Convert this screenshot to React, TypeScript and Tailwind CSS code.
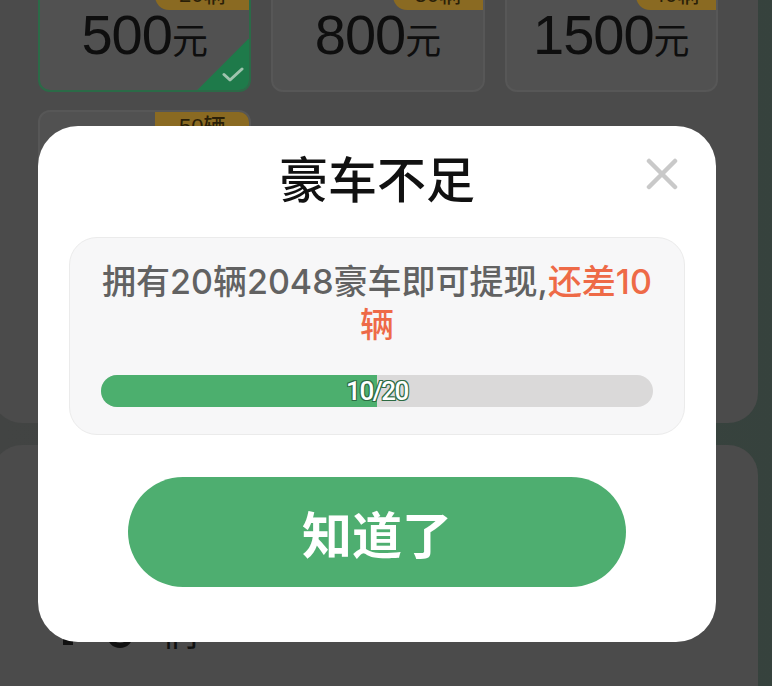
type Amount = {
  value: string;
  badge: string;
  badgeClass: string;
  selected?: boolean;
};

const amounts: Amount[] = [
  { value: "500", badge: "20辆", badgeClass: "w-[94px]", selected: true },
  { value: "800", badge: "30辆", badgeClass: "w-[90px]" },
  { value: "1500", badge: "40辆", badgeClass: "w-[80px]" },
  { value: "2000", badge: "50辆", badgeClass: "w-[94px]" },
];

function AmountCard({ value, badge, badgeClass, selected }: Amount) {
  return (
    <div
      className={`relative h-[114px] overflow-hidden rounded-[12px] border-2 bg-[#515151] ${
        selected ? "border-[#2b6a47]" : "border-[#575757]"
      }`}
    >
      <div
        className={`absolute right-0 top-0 h-[30px] rounded-bl-[14px] bg-[#8a6a22] text-center text-[22px] font-medium leading-[30px] text-[#2a1f08] ${badgeClass}`}
      >
        {badge}
      </div>
      <div className="flex items-baseline justify-center pt-[27px] leading-none text-[#0e0e0e]">
        <span className="text-[56px] tracking-[-1px]">{value}</span>
        <span className="text-[36px]">元</span>
      </div>
      {selected ? (
        <div className="absolute bottom-0 right-0 h-[52px] w-[52px] bg-[#1e7a4a] [clip-path:polygon(100%_0,100%_100%,0_100%)]">
          <svg
            className="absolute left-[25px] top-[29px]"
            width="22"
            height="15"
            viewBox="0 0 22 15"
            fill="none"
            stroke="#9fc4ae"
            strokeWidth="3"
            strokeLinecap="round"
            strokeLinejoin="round"
          >
            <path d="M2 7.5 L8 13 L20 2" />
          </svg>
        </div>
      ) : null}
    </div>
  );
}

function CloseIcon() {
  return (
    <svg width="32" height="32" viewBox="0 0 32 32" fill="none" stroke="currentColor" strokeWidth="4.5" strokeLinecap="round">
      <path d="M3 3 L29 29 M29 3 L3 29" />
    </svg>
  );
}

export default function App() {
  return (
    <div className="relative h-[686px] w-[772px] overflow-hidden bg-gradient-to-r from-[#424443] via-[#3f4341] to-[#36423d] font-['Liberation_Sans','Noto_Sans_CJK_SC',sans-serif]">
      {/* page behind the mask */}
      <div className="ml-[-8px] flex w-[766px] flex-col">
        <div className="mt-[-60px] h-[483px] rounded-[30px] bg-[#4b4b4b] pl-[46px] pr-[40px] pt-[38px]">
          <div className="grid grid-cols-3 gap-x-5 gap-y-[18px]">
            {amounts.map((a) => (
              <AmountCard key={a.value} {...a} />
            ))}
          </div>
        </div>
        <div className="mt-[22px] h-[300px] rounded-[30px] bg-[#4b4b4b] pl-[71px] pt-[163px]">
          <div className="flex h-[40px] items-end text-[#111]">
            <div className="mb-[3px] h-[30px] w-[10px] bg-[#111]" />
            <div className="ml-[34px] h-[26px] w-[26px] rounded-full border-[5px] border-[#111]" />
            <span className="ml-[29px] font-['Noto_Sans_CJK_SC',sans-serif] text-[36px] leading-none">们</span>
          </div>
        </div>
      </div>

      {/* dialog */}
      <div className="absolute left-[38px] top-[126px] flex h-[516px] w-[678px] flex-col items-center rounded-[40px] bg-white font-['Inter','Noto_Sans_CJK_SC',sans-serif]">
        <button className="absolute right-[38px] top-[32px] text-[#c9c9c9]">
          <CloseIcon />
        </button>
        <h2 className="pt-[26px] font-['Noto_Sans_CJK_SC',sans-serif] text-[49px] font-medium leading-none text-[#111]">
          豪车不足
        </h2>
        <div className="mt-[36px] w-[616px] rounded-[28px] border border-[#ebebeb] bg-[#f7f7f8] px-[24px] pb-[27px] pt-[22px]">
          <p className="text-center text-[34px] font-medium leading-[43px] text-[#626262]">
            拥有20辆2048豪车即可提现,<span className="text-[#ee6a47]">还差10辆</span>
          </p>
          <div className="relative mx-[7px] mt-[29px] h-[32px] overflow-hidden rounded-full bg-[#dad9d9]">
            <div className="h-full w-1/2 bg-[#4caf6e]" />
            <div className="absolute inset-0 flex items-center justify-center font-['Roboto',sans-serif] text-[26px] font-medium tracking-[-1.5px] text-white [text-shadow:1px_1px_0_#2d6b43,-1px_-1px_0_#2d6b43,1px_-1px_0_#2d6b43,-1px_1px_0_#2d6b43]">
              10/20
            </div>
          </div>
        </div>
        <button className="mt-[42px] flex h-[110px] w-[498px] items-center justify-center rounded-full bg-[#4eae70] font-['Noto_Sans_CJK_SC',sans-serif] text-[50px] font-bold text-white">
          知道了
        </button>
      </div>
    </div>
  );
}
